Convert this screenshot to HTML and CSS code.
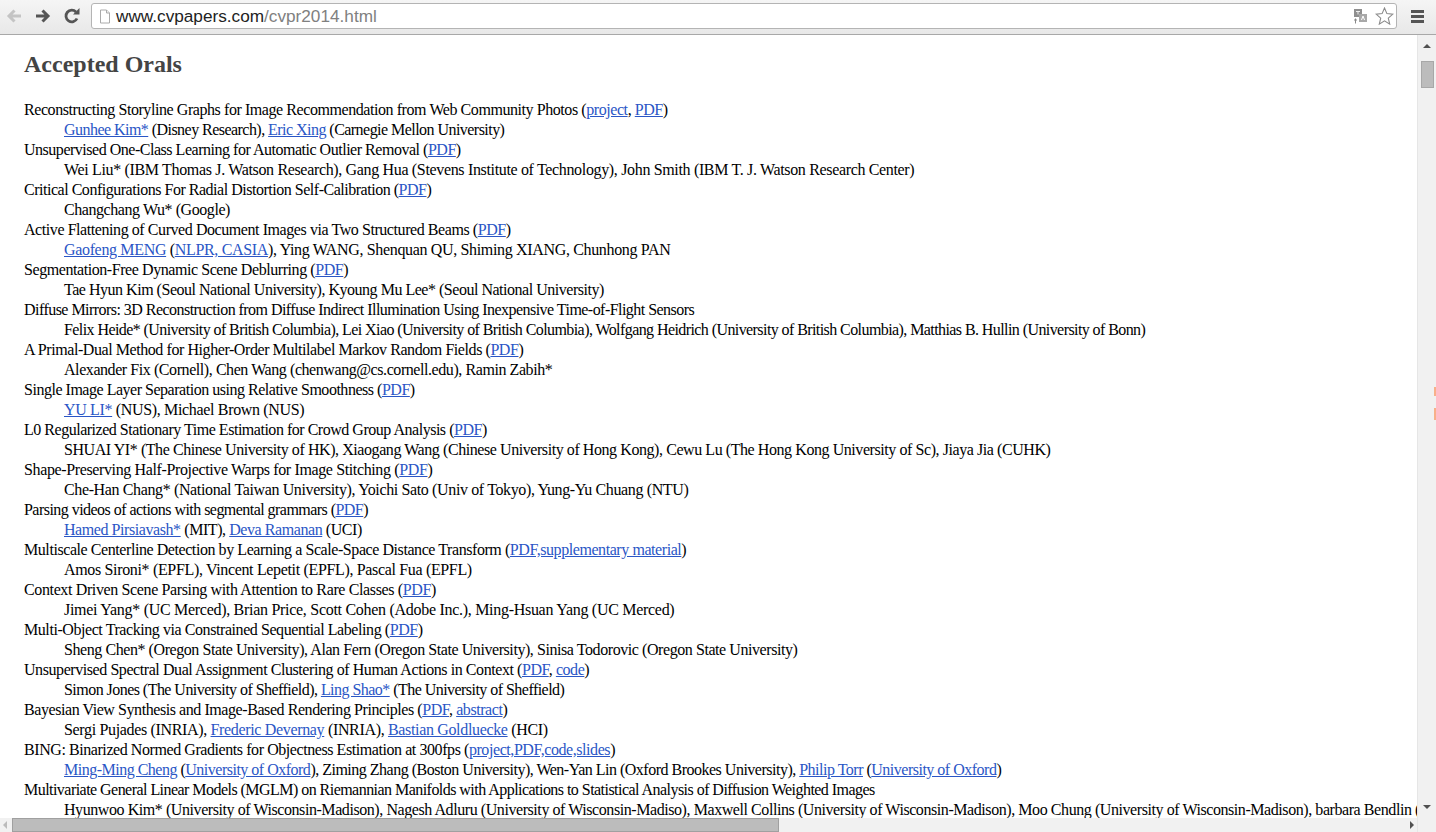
FILE: index.html
```html
<!DOCTYPE html>
<html lang="en">
<head>
<meta charset="utf-8">
<title>CVPR 2014</title>
<link rel="stylesheet" href="styles.css">
</head>
<body>
<div class="toolbar">
  <svg class="nav nav-back" width="18" height="16" viewBox="0 0 18 16"><path d="M16 8H5M9.500 2.500 4 8l5.500 5.500" fill="none" stroke="#c4c4c4" stroke-width="3"/></svg>
  <svg class="nav nav-fwd" width="18" height="16" viewBox="0 0 18 16"><path d="M2 8h11M8.500 2.500 14 8l-5.500 5.500" fill="none" stroke="#555" stroke-width="3"/></svg>
  <svg class="nav nav-reload" width="18" height="18" viewBox="0 0 18 18"><path d="M14 11.500A5.800 5.800 0 1 1 13 5" fill="none" stroke="#555" stroke-width="2.800"/><path d="M10 7.500h6.500V1z" fill="#555"/></svg>
  <div class="omnibox">
    <svg class="page-icon" width="12" height="15" viewBox="0 0 12 15"><path d="M1.500 1h6l3 3v10h-9z" fill="#fff" stroke="#aaa"/><path d="M7.500 1v3h3" fill="#eee" stroke="#aaa"/></svg>
    <span class="url"><span class="host">www.cvpapers.com</span>/cvpr2014.html</span>
    <svg class="translate" width="15" height="15" viewBox="0 0 15 15"><rect x="1" y="0" width="8" height="8" fill="#8f8f8f"/><rect x="6" y="5" width="8" height="8" fill="#a8a8a8"/><path d="M3 2.500h4M5 2.500v3" stroke="#eee" fill="none"/><path d="M8.500 11 10 7l1.500 4" stroke="#fff" fill="none"/><path d="M1 11h3M2.500 9.500v5" stroke="#888" fill="none"/></svg>
    <svg class="star" width="19" height="18" viewBox="0 0 19 18"><path d="m9.500 1 2.400 5.600 6 .5-4.600 4 1.400 6-5.200-3.200-5.200 3.200 1.400-6-4.600-4 6-.5z" fill="#fff" stroke="#8a8a8a" stroke-width="1.100"/></svg>
  </div>
  <div class="menu"><span></span><span></span><span></span></div>
</div>
<div class="viewport">
  <div class="main">
    <div class="page">
      <h2 class="heading">Accepted Orals</h2>
      <dl class="list">
        <dt>Reconstructing Storyline Graphs for Image Recommendation from Web Community Photos (<a href="#">project</a>, <a href="#">PDF</a>)</dt>
        <dd class="track-xtight"><a href="#">Gunhee Kim*</a> (Disney Research), <a href="#">Eric Xing</a> (Carnegie Mellon University)</dd>
        <dt class="track-tight">Unsupervised One-Class Learning for Automatic Outlier Removal (<a href="#">PDF</a>)</dt>
        <dd class="track-wide">Wei Liu* (IBM Thomas J. Watson Research), Gang Hua (Stevens Institute of Technology), John Smith (IBM T. J. Watson Research Center)</dd>
        <dt class="track-tight">Critical Configurations For Radial Distortion Self-Calibration (<a href="#">PDF</a>)</dt>
        <dd>Changchang Wu* (Google)</dd>
        <dt>Active Flattening of Curved Document Images via Two Structured Beams (<a href="#">PDF</a>)</dt>
        <dd class="track-wide"><a href="#">Gaofeng MENG</a> (<a href="#">NLPR, CASIA</a>), Ying WANG, Shenquan QU, Shiming XIANG, Chunhong PAN</dd>
        <dt>Segmentation-Free Dynamic Scene Deblurring (<a href="#">PDF</a>)</dt>
        <dd class="track-tight">Tae Hyun Kim (Seoul National University), Kyoung Mu Lee* (Seoul National University)</dd>
        <dt class="track-xtight">Diffuse Mirrors: 3D Reconstruction from Diffuse Indirect Illumination Using Inexpensive Time-of-Flight Sensors</dt>
        <dd class="track-xxtight">Felix Heide* (University of British Columbia), Lei Xiao (University of British Columbia), Wolfgang Heidrich (University of British Columbia), Matthias B. Hullin (University of Bonn)</dd>
        <dt>A Primal-Dual Method for Higher-Order Multilabel Markov Random Fields (<a href="#">PDF</a>)</dt>
        <dd>Alexander Fix (Cornell), Chen Wang (chenwang@cs.cornell.edu), Ramin Zabih*</dd>
        <dt class="track-tight">Single Image Layer Separation using Relative Smoothness (<a href="#">PDF</a>)</dt>
        <dd class="track-wide"><a href="#">YU LI*</a> (NUS), Michael Brown (NUS)</dd>
        <dt class="track-tight">L0 Regularized Stationary Time Estimation for Crowd Group Analysis (<a href="#">PDF</a>)</dt>
        <dd>SHUAI YI* (The Chinese University of HK), Xiaogang Wang (Chinese University of Hong Kong), Cewu Lu (The Hong Kong University of Sc), Jiaya Jia (CUHK)</dd>
        <dt class="track-mid">Shape-Preserving Half-Projective Warps for Image Stitching (<a href="#">PDF</a>)</dt>
        <dd class="track-mid">Che-Han Chang* (National Taiwan University), Yoichi Sato (Univ of Tokyo), Yung-Yu Chuang (NTU)</dd>
        <dt class="track-xtight">Parsing videos of actions with segmental grammars (<a href="#">PDF</a>)</dt>
        <dd><a href="#">Hamed Pirsiavash*</a> (MIT), <a href="#">Deva Ramanan</a> (UCI)</dd>
        <dt>Multiscale Centerline Detection by Learning a Scale-Space Distance Transform (<a href="#">PDF,supplementary material</a>)</dt>
        <dd class="track-wide">Amos Sironi* (EPFL), Vincent Lepetit (EPFL), Pascal Fua (EPFL)</dd>
        <dt class="track-mid">Context Driven Scene Parsing with Attention to Rare Classes (<a href="#">PDF</a>)</dt>
        <dd class="track-xwide">Jimei Yang* (UC Merced), Brian Price, Scott Cohen (Adobe Inc.), Ming-Hsuan Yang (UC Merced)</dd>
        <dt>Multi-Object Tracking via Constrained Sequential Labeling (<a href="#">PDF</a>)</dt>
        <dd>Sheng Chen* (Oregon State University), Alan Fern (Oregon State University), Sinisa Todorovic (Oregon State University)</dd>
        <dt>Unsupervised Spectral Dual Assignment Clustering of Human Actions in Context (<a href="#">PDF</a>, <a href="#">code</a>)</dt>
        <dd class="track-xtight">Simon Jones (The University of Sheffield), <a href="#">Ling Shao*</a> (The University of Sheffield)</dd>
        <dt>Bayesian View Synthesis and Image-Based Rendering Principles (<a href="#">PDF</a>, <a href="#">abstract</a>)</dt>
        <dd class="track-wide">Sergi Pujades (INRIA), <a href="#">Frederic Devernay</a> (INRIA), <a href="#">Bastian Goldluecke</a> (HCI)</dd>
        <dt>BING: Binarized Normed Gradients for Objectness Estimation at 300fps (<a href="#">project,PDF,code,slides</a>)</dt>
        <dd class="track-snug"><a href="#">Ming-Ming Cheng</a> (<a href="#">University of Oxford</a>), Ziming Zhang (Boston University), Wen-Yan Lin (Oxford Brookes University), <a href="#">Philip Torr</a> (<a href="#">University of Oxford</a>)</dd>
        <dt class="track-xtight">Multivariate General Linear Models (MGLM) on Riemannian Manifolds with Applications to Statistical Analysis of Diffusion Weighted Images</dt>
        <dd>Hyunwoo Kim* (University of Wisconsin-Madison), Nagesh Adluru (University of Wisconsin-Madiso), Maxwell Collins (University of Wisconsin-Madison), Moo Chung (University of Wisconsin-Madison), barbara Bendlin (University of Wisconsin-Madison)</dd>
      </dl>
    </div>
    <div class="hbar">
      <span class="arrow arrow-left"></span>
      <div class="hthumb"></div>
      <span class="arrow arrow-right"></span>
    </div>
  </div>
  <div class="vbar">
    <span class="arrow arrow-up"></span>
    <div class="vthumb"></div>
    <span class="arrow arrow-down"></span>
    <span class="edge-mark edge-mark-a"></span>
    <span class="edge-mark edge-mark-b"></span>
  </div>
</div>
</body>
</html>
```
FILE: styles.css
```css
* { box-sizing: border-box; }
html, body { margin: 0; height: 100%; overflow: hidden; }
body {
  width: 1436px;
  height: 832px;
  display: flex;
  flex-direction: column;
  background: #fff;
  font-family: "Liberation Serif", "Times New Roman", serif;
}
.toolbar {
  height: 35px;
  flex: none;
  display: flex;
  align-items: center;
  padding: 0 0 2px 5px;
  background: linear-gradient(#f5f5f5, #e8e8e8);
  border-bottom: 1px solid #a8a8a8;
}
.nav { flex: none; }
.nav-fwd { margin-left: 11px; }
.nav-reload { margin-left: 11px; }
.omnibox {
  width: 1306px;
  height: 26px;
  margin-left: 10px;
  display: flex;
  align-items: center;
  padding: 0 2px 0 7px;
  background: #fff;
  border: 1px solid #b4b4b4;
  border-radius: 3px;
}
.page-icon { flex: none; }
.url {
  flex: 1;
  margin-left: 5px;
  font-family: "Liberation Sans", Arial, sans-serif;
  font-size: 17.200px;
  color: #808080;
  white-space: nowrap;
}
.host { color: #222; }
.translate { flex: none; margin-right: 7px; }
.star { flex: none; }
.menu {
  margin-left: 14px;
  width: 13px;
  display: flex;
  flex-direction: column;
  gap: 2px;
}
.menu span { height: 3px; background: #555; }
.viewport { flex: 1; min-height: 0; display: flex; }
.main { flex: 1; min-width: 0; display: flex; flex-direction: column; }
.page {
  flex: 1;
  min-height: 0;
  overflow: hidden;
  padding: 16px 0 0 24px;
}
.heading {
  margin: 0 0 22px;
  font-size: 24px;
  line-height: 27px;
  font-weight: bold;
  color: #444;
}
.list { margin: 0; font-size: 16px; line-height: 20px; color: #000; letter-spacing: -0.43px; }
.list dt, .list dd { white-space: nowrap; }
.list dd { margin: 0 0 0 40px; }
.list a { color: #2a56c6; }
.list .track-xwide { letter-spacing: -0.29px; }
.list .track-wide { letter-spacing: -0.34px; }
.list .track-mid { letter-spacing: -0.37px; }
.list .track-tight { letter-spacing: -0.48px; }
.list .track-snug { letter-spacing: -0.50px; }
.list .track-xtight { letter-spacing: -0.54px; }
.list .track-xxtight { letter-spacing: -0.58px; }
.hbar {
  height: 14px;
  flex: none;
  display: flex;
  align-items: stretch;
  background: #f1f1f1;
}
.hthumb {
  width: 767px;
  margin-left: 5px;
  background: #bcbcbc;
  border: 1px solid #a0a0a0;
}
.vbar {
  position: relative;
  width: 19px;
  flex: none;
  display: flex;
  flex-direction: column;
  align-items: center;
  background: #f1f1f1;
  border-left: 1px solid #e6e6e6;
  padding-top: 9px;
}
.vthumb {
  width: 13px;
  height: 27px;
  margin-top: 13px;
  background: #bcbcbc;
  border: 1px solid #a8a8a8;
}
.edge-mark {
  position: absolute;
  right: 0;
  width: 2px;
  background: #f8b08a;
}
.edge-mark-a { top: 352px; height: 9px; }
.edge-mark-b { top: 373px; height: 12px; }
.arrow { display: block; width: 0; height: 0; border-style: solid; border-color: transparent; flex: none; }
.arrow-up { border-width: 0 4px 4px; border-bottom-color: #505050; }
.arrow-down { margin-top: auto; margin-bottom: 23px; border-width: 4px 4px 0; border-top-color: #505050; }
.arrow-left { align-self: center; margin-left: 3px; border-width: 4px 4px 4px 0; border-right-color: #bbb; }
.arrow-right { align-self: center; margin-left: auto; margin-right: 3px; border-width: 4px 0 4px 4px; border-left-color: #505050; }
```
